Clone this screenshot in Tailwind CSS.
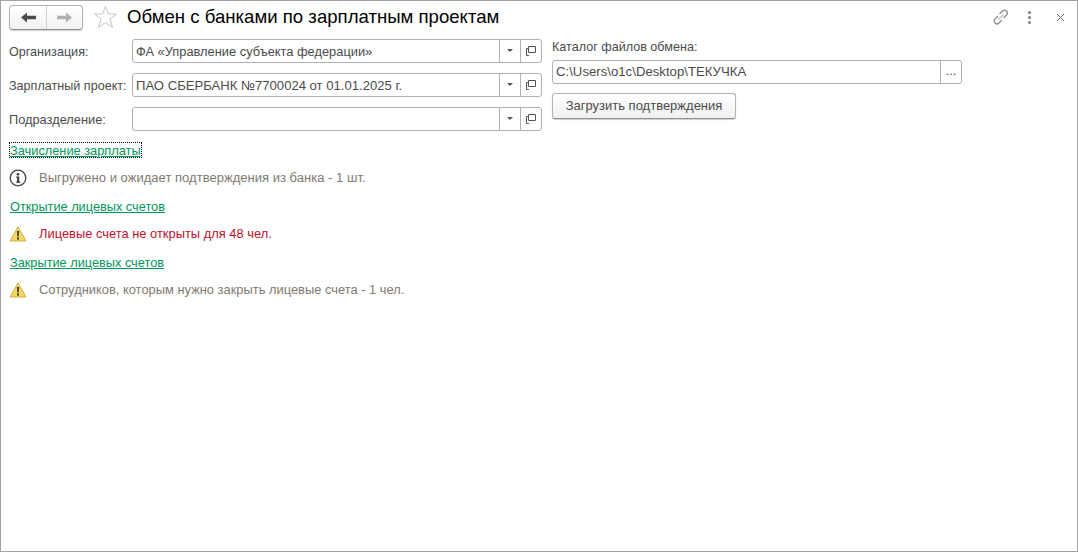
<!DOCTYPE html>
<html lang="ru">
<head>
  <meta charset="UTF-8">
  <title>Обмен с банками по зарплатным проектам</title>
  <script src="https://cdn.jsdelivr.net/npm/@tailwindcss/browser@4"></script>
</head>
<body class="bg-white font-['Liberation_Sans',Arial,sans-serif] text-[12.6px] leading-[16px] text-[#4b4b4b]">
  <div class="h-[552px] w-[1078px] border border-[#a3a3a3] overflow-hidden">
    <!-- Шапка -->
    <div class="flex items-center h-[28px] mt-[2px] pl-[8px]">
      <div class="flex h-[25px] w-[74px] rounded-[4px] border border-[#b4b4b4] border-b-[#8f8f8f] bg-gradient-to-b from-white to-[#f1f1f1] shadow-[0_1px_1px_rgba(0,0,0,0.2)]">
        <div class="flex w-[37px] items-center justify-center border-r border-[#d0d0d0]">
          <svg width="15" height="11" viewBox="0 0 15 11"><path d="M0 5.5 6 0.5V3.8H15V7.2H6V10.5Z" fill="#4a4a4a"/></svg>
        </div>
        <div class="flex flex-1 items-center justify-center">
          <svg width="15" height="11" viewBox="0 0 15 11"><path d="M15 5.5 9 0.5V3.8H0V7.2H9V10.5Z" fill="#b0b0b0"/></svg>
        </div>
      </div>
      <svg class="ml-[10px]" width="25" height="24" viewBox="0 0 25 24"><path d="M12.5 1.5 15.5 9H23.5L17 14 19.5 22.5 12.5 17.5 5.5 22.5 8 14 1.5 9H9.5Z" fill="#fff" stroke="#c4c4c4"/></svg>
      <h1 class="ml-[9px] text-[18.6px] leading-[24px] text-black">Обмен с банками по зарплатным проектам</h1>
      <div class="ml-auto flex items-center">
        <svg width="18" height="18" viewBox="0 0 18 18" fill="none" stroke="#8a8a8a" stroke-width="1.2"><path d="M7.5 6 10.5 3a2.6 2.6 0 0 1 4 4L11.5 10"/><path d="M10 12 7 15a2.6 2.6 0 0 1-4-4L6 8"/><path d="M6.5 11.5 11.5 6.5" stroke="#c0c0c0"/></svg>
        <div class="ml-[18px] flex w-[4px] flex-col gap-[2px]">
          <div class="h-[3px] w-[3px] rounded-full bg-[#808080]"></div>
          <div class="h-[3px] w-[3px] rounded-full bg-[#808080]"></div>
          <div class="h-[3px] w-[3px] rounded-full bg-[#808080]"></div>
        </div>
        <svg class="ml-[24px] mr-[12px]" width="9" height="9" viewBox="0 0 9 9" stroke="#707070" stroke-width="1"><path d="M1 1 8 8M8 1 1 8"/></svg>
      </div>
    </div>

    <!-- Форма -->
    <div class="mt-[8px] flex pl-[8px]">
      <div class="w-[533px]">
        <div class="flex h-[24px] items-center">
          <label class="w-[123px] pt-[2px]">Организация:</label>
          <div class="flex h-[24px] w-[410px] rounded-[3px] border border-[#b0b0b0]">
            <div class="flex-1 pl-[3px] text-[12.85px] leading-[24px]">ФА «Управление субъекта федерации»</div>
            <div class="flex w-[21px] items-center justify-center border-l border-[#b0b0b0]"><div class="-mt-[2px] h-0 w-0 border-x-[3px] border-t-[3px] border-x-transparent border-t-[#555]"></div></div>
            <div class="flex w-[21px] items-center justify-center border-l border-[#b0b0b0]">
              <svg class="-mt-[1px]" width="10" height="10" viewBox="0 0 10 10" fill="none" stroke="#555"><path d="M2.5 0.5H9.5V6.5H2.5Z"/><path d="M2.5 2.5H0.5V9.5H3"/></svg>
            </div>
          </div>
        </div>
        <div class="mt-[10px] flex h-[24px] items-center">
          <label class="w-[123px] whitespace-nowrap pt-[2px]">Зарплатный проект:</label>
          <div class="flex h-[24px] w-[410px] rounded-[3px] border border-[#b0b0b0]">
            <div class="flex-1 pl-[3px] text-[13.1px] leading-[24px]">ПАО СБЕРБАНК №7700024 от 01.01.2025 г.</div>
            <div class="flex w-[21px] items-center justify-center border-l border-[#b0b0b0]"><div class="-mt-[2px] h-0 w-0 border-x-[3px] border-t-[3px] border-x-transparent border-t-[#555]"></div></div>
            <div class="flex w-[21px] items-center justify-center border-l border-[#b0b0b0]">
              <svg class="-mt-[1px]" width="10" height="10" viewBox="0 0 10 10" fill="none" stroke="#555"><path d="M2.5 0.5H9.5V6.5H2.5Z"/><path d="M2.5 2.5H0.5V9.5H3"/></svg>
            </div>
          </div>
        </div>
        <div class="mt-[10px] flex h-[24px] items-center">
          <label class="w-[123px] pt-[2px] text-[12.8px]">Подразделение:</label>
          <div class="flex h-[24px] w-[410px] rounded-[3px] border border-[#b0b0b0]">
            <div class="flex-1 pl-[3px] text-[13.1px] leading-[24px]"></div>
            <div class="flex w-[21px] items-center justify-center border-l border-[#b0b0b0]"><div class="-mt-[2px] h-0 w-0 border-x-[3px] border-t-[3px] border-x-transparent border-t-[#555]"></div></div>
            <div class="flex w-[21px] items-center justify-center border-l border-[#b0b0b0]">
              <svg class="-mt-[1px]" width="10" height="10" viewBox="0 0 10 10" fill="none" stroke="#555"><path d="M2.5 0.5H9.5V6.5H2.5Z"/><path d="M2.5 2.5H0.5V9.5H3"/></svg>
            </div>
          </div>
        </div>
      </div>

      <div class="ml-[10px] w-[410px]">
        <div class="h-[21px] leading-[16px]">Каталог файлов обмена:</div>
        <div class="flex h-[24px] rounded-[3px] border border-[#b0b0b0]">
          <div class="flex-1 pl-[3px] text-[13.2px] leading-[22px]">C:\Users\o1c\Desktop\ТЕКУЧКА</div>
          <div class="flex w-[21px] items-start justify-center border-l border-[#b0b0b0] leading-[20px]">...</div>
        </div>
        <button class="mt-[9px] block h-[26px] w-[184px] rounded-[3px] border border-[#b4b4b4] border-b-[#8f8f8f] bg-gradient-to-b from-white to-[#f0f0f0] text-center text-[13px] shadow-[0_1px_1px_rgba(0,0,0,0.2)]">Загрузить подтверждения</button>
      </div>
    </div>

    <!-- Ссылки и статусы -->
    <div class="mt-[11px] flex flex-col items-start pl-[8px]">
      <a class="block h-[16px] border border-dotted border-black text-[12.8px] leading-[16px] text-[#00975a] underline">Зачисление зарплаты</a>
      <div class="mt-[10px] flex h-[20px] items-center">
        <svg width="18" height="18" viewBox="0 0 18 18"><circle cx="9" cy="9" r="7.8" fill="#fff" stroke="#4a4a4a" stroke-width="1.3"/><circle cx="9" cy="5.3" r="1.3" fill="#333"/><path d="M7.2 7.6H10.2V12.6H11.2V13.8H7.2V12.6H8.2V8.8H7.2Z" fill="#333"/></svg>
        <span class="ml-[12px] text-[13.05px] text-[#7f7a70]">Выгружено и ожидает подтверждения из банка - 1 шт.</span>
      </div>
      <a class="mt-[11px] block h-[16px] px-px text-[12.75px] leading-[16px] text-[#00975a] underline">Открытие лицевых счетов</a>
      <div class="mt-[9px] flex h-[20px] items-center">
        <svg width="18" height="16" viewBox="0 0 18 16"><path d="M9 1 17 15H1Z" fill="#f4d75e" stroke="#c9b04a" stroke-linejoin="round"/><path d="M8 5H10L9.7 10.5H8.3Z" fill="#333"/><rect x="8" y="11.5" width="2" height="2" fill="#333"/></svg>
        <span class="ml-[12px] text-[12.9px] text-[#c00f2e]">Лицевые счета не открыты для 48 чел.</span>
      </div>
      <a class="mt-[11px] block h-[16px] px-px text-[12.75px] leading-[16px] text-[#00975a] underline">Закрытие лицевых счетов</a>
      <div class="mt-[9px] flex h-[20px] items-center">
        <svg width="18" height="16" viewBox="0 0 18 16"><path d="M9 1 17 15H1Z" fill="#f4d75e" stroke="#c9b04a" stroke-linejoin="round"/><path d="M8 5H10L9.7 10.5H8.3Z" fill="#333"/><rect x="8" y="11.5" width="2" height="2" fill="#333"/></svg>
        <span class="ml-[12px] text-[12.9px] text-[#7f7a70]">Сотрудников, которым нужно закрыть лицевые счета - 1 чел.</span>
      </div>
    </div>
  </div>
</body>
</html>
